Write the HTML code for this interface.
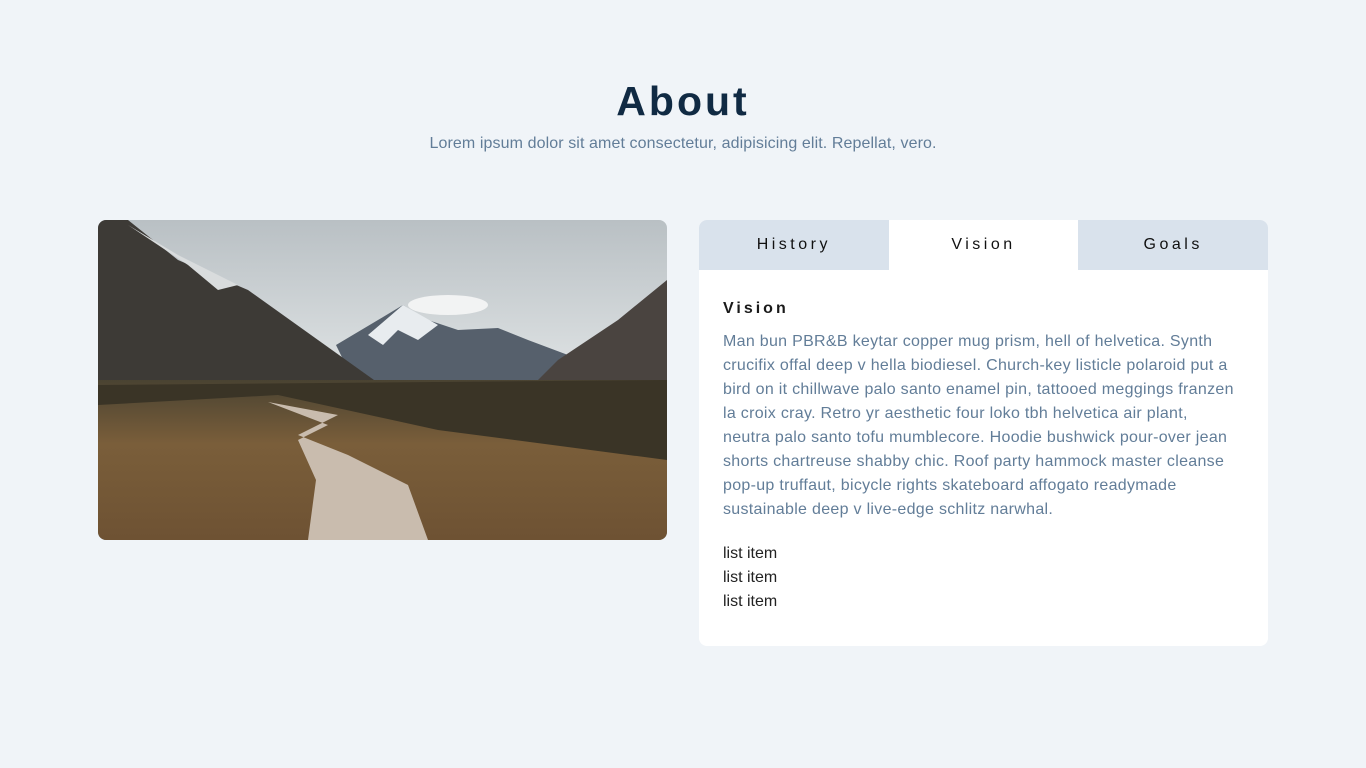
<!DOCTYPE html>
<html><head><meta charset="utf-8"><style>
body{margin:0;background:#f0f4f8;font-family:"Liberation Sans",sans-serif;width:1366px;height:768px;overflow:hidden;position:relative}
h1{position:absolute;top:77px;left:0;width:1366px;margin:0;text-align:center;font-size:41px;letter-spacing:3px;color:#102a43;font-weight:bold;line-height:48px}
.sub{position:absolute;top:133px;left:0;width:1366px;text-align:center;color:#627d98;font-size:16px;line-height:22px;letter-spacing:0.1px}
.img{position:absolute;left:98px;top:220px;width:569px;height:320px;border-radius:8px;overflow:hidden}
.card{position:absolute;left:699px;top:220px;width:569px;height:426px;background:#fff;border-radius:8px;overflow:hidden}
.tabs{display:flex;height:50px}
.tab{flex:1;background:#d9e2ec;text-align:center;line-height:50px;font-size:16px;letter-spacing:3.5px;color:#111}
.tab.a{background:#fff}
.body{padding:0 24px}
h4{margin:29px 0 11px;font-size:16px;letter-spacing:3px;color:#1a1a1a;line-height:20px}
p{margin:0;color:#627d98;font-size:16px;line-height:24px;letter-spacing:0.3px}
ul{list-style:none;margin:20px 0 0;padding:0;color:#222;font-size:16px;line-height:24px}
</style></head><body>
<h1>About</h1>
<div class="sub">Lorem ipsum dolor sit amet consectetur, adipisicing elit. Repellat, vero.</div>
<div class="img"><svg width="569" height="320" viewBox="0 0 569 320">
<defs><linearGradient id="s" x1="0" y1="0" x2="0" y2="1"><stop offset="0" stop-color="#b9c0c4"/><stop offset=".5" stop-color="#dfe3e4"/><stop offset="1" stop-color="#8fa9b8"/></linearGradient>
<linearGradient id="g" x1="0" y1="0" x2="0" y2="1"><stop offset="0" stop-color="#4a4332"/><stop offset=".4" stop-color="#7a5e3a"/><stop offset="1" stop-color="#6e5233"/></linearGradient></defs>
<rect width="569" height="320" fill="url(#s)"/>
<ellipse cx="350" cy="85" rx="40" ry="10" fill="#f2f3f3"/>
<polygon points="238,125 280,100 305,85 330,100 360,110 400,108 430,120 470,135 440,170 260,170" fill="#56606c"/>
<polygon points="270,115 305,85 340,105 320,120 300,110 285,125" fill="#e8ecef"/>
<polygon points="0,0 30,0 80,40 150,70 220,120 290,170 0,170" fill="#3d3a36"/>
<polygon points="30,5 80,35 140,65 120,70 90,45" fill="#d9dcdd"/>
<polygon points="569,60 520,100 460,140 430,170 569,170" fill="#4a4440"/>
<rect y="160" width="569" height="160" fill="url(#g)"/>
<polygon points="0,165 569,160 569,240 340,210 180,175 0,185" fill="#3a3426"/>
<polygon points="170,182 240,195 200,215 250,235 310,265 330,320 210,320 218,260 200,220 230,205" fill="#c9bcae"/>
</svg></div>
<div class="card">
<div class="tabs"><div class="tab">History</div><div class="tab a">Vision</div><div class="tab">Goals</div></div>
<div class="body">
<h4>Vision</h4>
<p>Man bun PBR&amp;B keytar copper mug prism, hell of helvetica. Synth<br>crucifix offal deep v hella biodiesel. Church-key listicle polaroid put a<br>bird on it chillwave palo santo enamel pin, tattooed meggings franzen<br>la croix cray. Retro yr aesthetic four loko tbh helvetica air plant,<br>neutra palo santo tofu mumblecore. Hoodie bushwick pour-over jean<br>shorts chartreuse shabby chic. Roof party hammock master cleanse<br>pop-up truffaut, bicycle rights skateboard affogato readymade<br>sustainable deep v live-edge schlitz narwhal.</p>
<ul><li>list item</li><li>list item</li><li>list item</li></ul>
</div></div>
</body></html>
